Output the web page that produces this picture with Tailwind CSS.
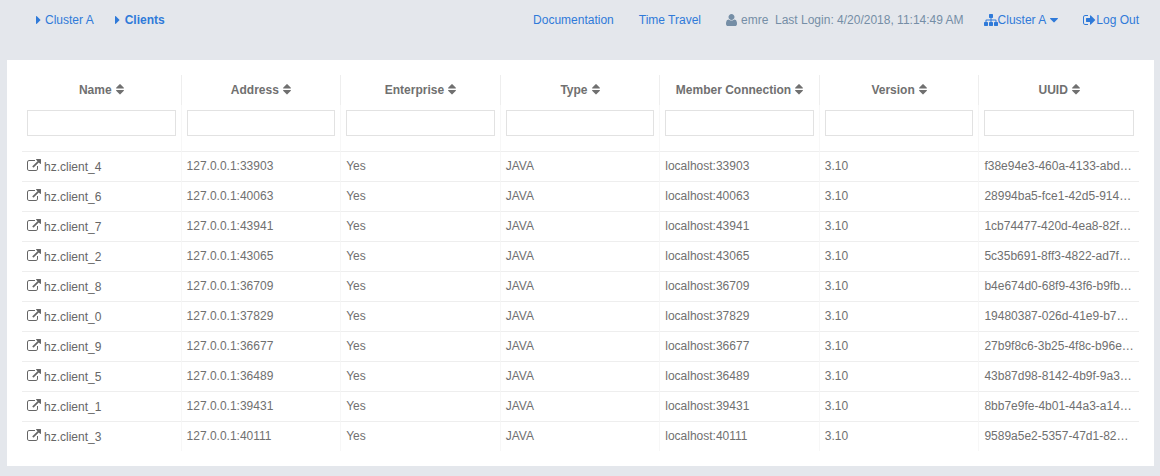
<!DOCTYPE html>
<html lang="en">
<head>
<meta charset="utf-8">
<meta name="viewport" content="width=device-width, initial-scale=1">
<title>Clients</title>
<script src="https://cdn.jsdelivr.net/npm/@tailwindcss/browser@4"></script>
</head>
<body class="min-h-screen bg-[#e4e7ec] font-['Liberation_Sans',Arial,sans-serif] text-xs text-[#707070]">
<svg class="hidden" aria-hidden="true">
  <symbol id="caret-right" viewBox="576 0 640 1792"><path d="M1152 896q0 26-19 45l-448 448q-19 19-45 19t-45-19-19-45v-896q0-26 19-45t45-19 45 19l448 448q19 19 19 45z"/></symbol>
  <symbol id="caret-down" viewBox="384 0 1024 1792"><path d="M1408 704q0 26-19 45l-448 448q-19 19-45 19t-45-19l-448-448q-19-19-19-45t19-45 45-19h896q26 0 45 19t19 45z"/></symbol>
  <symbol id="sort" viewBox="384 0 1024 1792"><path d="M1408 960q0 26-19 45l-448 448q-19 19-45 19t-45-19l-448-448q-19-19-19-45t19-45 45-19h896q26 0 45 19t19 45zm0-320q0 26-19 45t-45 19h-896q-26 0-45-19t-19-45 19-45l448-448q19-19 45-19t45 19l448 448q19 19 19 45z"/></symbol>
  <symbol id="user" viewBox="192 0 1408 1792"><path d="M1600 1405q0 120-73 189.500t-194 69.500h-874q-121 0-194-69.500t-73-189.500q0-53 3.500-103.500t14-109 26.500-108.500 43-97.500 62-81 85.500-53.500 111.500-20q9 0 42 21.500t74.500 48 108 48 133.500 21.500 133.500-21.500 108-48 74.500-48 42-21.500q61 0 111.500 20t85.500 53.500 62 81 43 97.500 26.500 108.500 14 109 3.500 103.500zm-320-893q0 159-112.500 271.500t-271.500 112.500-271.500-112.500-112.500-271.500 112.500-271.500 271.500-112.500 271.500 112.500 112.500 271.500z"/></symbol>
  <symbol id="sitemap" viewBox="0 0 1792 1792"><path d="M1792 1248v320q0 40-28 68t-68 28h-320q-40 0-68-28t-28-68v-320q0-40 28-68t68-28h96v-192h-512v192h96q40 0 68 28t28 68v320q0 40-28 68t-68 28h-320q-40 0-68-28t-28-68v-320q0-40 28-68t68-28h96v-192h-512v192h96q40 0 68 28t28 68v320q0 40-28 68t-68 28h-320q-40 0-68-28t-28-68v-320q0-40 28-68t68-28h96v-192q0-52 38-90t90-38h512v-192h-96q-40 0-68-28t-28-68v-320q0-40 28-68t68-28h320q40 0 68 28t28 68v320q0 40-28 68t-68 28h-96v192h512q52 0 90 38t38 90v192h96q40 0 68 28t28 68z"/></symbol>
  <symbol id="sign-out" viewBox="64 0 1664 1792"><path d="M704 1440q0 4 1 20t.5 26.500-3 23.500-10 19.500-20.500 6.500h-320q-119 0-203.500-84.500t-84.500-203.500v-704q0-119 84.500-203.500t203.500-84.500h320q13 0 22.500 9.500t9.500 22.500q0 4 1 20t.5 26.500-3 23.500-10 19.500-20.500 6.500h-320q-66 0-113 47t-47 113v704q0 66 47 113t113 47h312l11.500 1 11.500 3 8 5.500 7 9 2 13.500zm928-544q0 26-19 45l-544 544q-19 19-45 19t-45-19-19-45v-288h-448q-26 0-45-19t-19-45v-384q0-26 19-45t45-19h448v-288q0-26 19-45t45-19 45 19l544 544q19 19 19 45z"/></symbol>
  <symbol id="external" viewBox="0 0 1792 1792"><path d="M1408 928v320q0 119-84.500 203.500t-203.500 84.500h-832q-119 0-203.500-84.500t-84.500-203.500v-832q0-119 84.500-203.500t203.500-84.500h704q14 0 23 9t9 23v64q0 14-9 23t-23 9h-704q-66 0-113 47t-47 113v832q0 66 47 113t113 47h832q66 0 113-47t47-113v-320q0-14 9-23t23-9h64q14 0 23 9t9 23zm384-864v512q0 26-19 45t-45 19-45-19l-176-176-652 652q-10 10-23 10t-23-10l-114-114q-10-10-10-23t10-23l652-652-176-176q-19-19-19-45t19-45 45-19h512q26 0 45 19t19 45z"/></symbol>
</svg>

<header class="flex h-10 items-center justify-between pr-[21px] pl-9 text-[#2f7ad9]">
  <nav aria-label="Breadcrumb" class="flex items-center gap-[21px]">
    <a href="#" class="flex items-center gap-1"><svg class="h-3.5 w-[5px] fill-current"><use href="#caret-right"/></svg>Cluster A</a>
    <a href="#" aria-current="page" class="flex items-center gap-[5px] font-bold"><svg class="h-3.5 w-[5px] fill-current"><use href="#caret-right"/></svg>Clients</a>
  </nav>
  <div class="flex items-center gap-[25px]">
    <a href="#">Documentation</a>
    <a href="#">Time Travel</a>
    <div class="flex items-center gap-5">
      <p class="flex items-center gap-1 whitespace-pre text-[#758ea6]"><svg class="h-3.5 w-[11px] fill-current"><use href="#user"/></svg><span>emre  Last Login: 4/20/2018, 11:14:49 AM</span></p>
      <button type="button" class="flex items-center"><svg class="size-3.5 fill-current"><use href="#sitemap"/></svg>Cluster A<svg class="ml-1 h-3.5 w-2 fill-current"><use href="#caret-down"/></svg></button>
    </div>
    <a href="#" class="flex items-center"><svg class="h-3.5 w-[13px] fill-current"><use href="#sign-out"/></svg>Log Out</a>
  </div>
</header>

<main class="mt-5 mr-1.5 ml-[7px] bg-white p-[15px]">
  <table class="w-full table-fixed border-separate border-spacing-0">
    <thead>
      <tr id="titles"></tr>
      <tr id="filters"></tr>
    </thead>
    <tbody id="clients"></tbody>
  </table>
</main>

<script>
  const columns = ["Name", "Address", "Enterprise", "Type", "Member Connection", "Version", "UUID"];
  const clients = [
    ["hz.client_4", "33903", "f38e94e3-460a-4133-abd…"],
    ["hz.client_6", "40063", "28994ba5-fce1-42d5-914…"],
    ["hz.client_7", "43941", "1cb74477-420d-4ea8-82f…"],
    ["hz.client_2", "43065", "5c35b691-8ff3-4822-ad7f…"],
    ["hz.client_8", "36709", "b4e674d0-68f9-43f6-b9fb…"],
    ["hz.client_0", "37829", "19480387-026d-41e9-b7…"],
    ["hz.client_9", "36677", "27b9f8c6-3b25-4f8c-b96e…"],
    ["hz.client_5", "36489", "43b87d98-8142-4b9f-9a3…"],
    ["hz.client_1", "39431", "8bb7e9fe-4b01-44a3-a14…"],
    ["hz.client_3", "40111", "9589a5e2-5357-47d1-82…"],
  ];

  document.getElementById("titles").innerHTML = columns.map(name => `
    <th scope="col" class="h-[30px] border-r border-[#eeeeee] p-0 last:border-r-0">
      <button type="button" class="flex w-full items-center justify-center gap-1 font-bold">${name}<svg class="h-3.5 w-2 fill-current"><use href="#sort"/></svg></button>
    </th>`).join("");

  document.getElementById("filters").innerHTML = columns.map(name => `
    <td class="h-[46px] border-r border-[#f7f7f7] px-[5px] pt-[5px] pb-0 align-top last:border-r-0">
      <input type="text" aria-label="Filter by ${name}" class="block h-[26px] w-full border border-[#e2e2e2] bg-white px-2">
    </td>`).join("");

  document.getElementById("clients").innerHTML = clients.map(([name, port, uuid]) => `
    <tr>
      <td class="h-[30px] border-t border-r border-t-[#eeeeee] border-r-[#f7f7f7] px-[5px] pt-0 pb-0.5">
        <a href="#" class="flex items-center gap-[3px] text-[#666666]"><svg class="size-3.5 fill-current"><use href="#external"/></svg><span class="pt-0.5">${name}</span></a>
      </td>
      ${["127.0.0.1:" + port, "Yes", "JAVA", "localhost:" + port, "3.10", uuid].map(text => `
      <td class="h-[30px] truncate border-t border-r border-t-[#eeeeee] border-r-[#f7f7f7] px-[5px] pt-0 pb-0.5 last:border-r-0">${text}</td>`).join("")}
    </tr>`).join("");
</script>
</body>
</html>
